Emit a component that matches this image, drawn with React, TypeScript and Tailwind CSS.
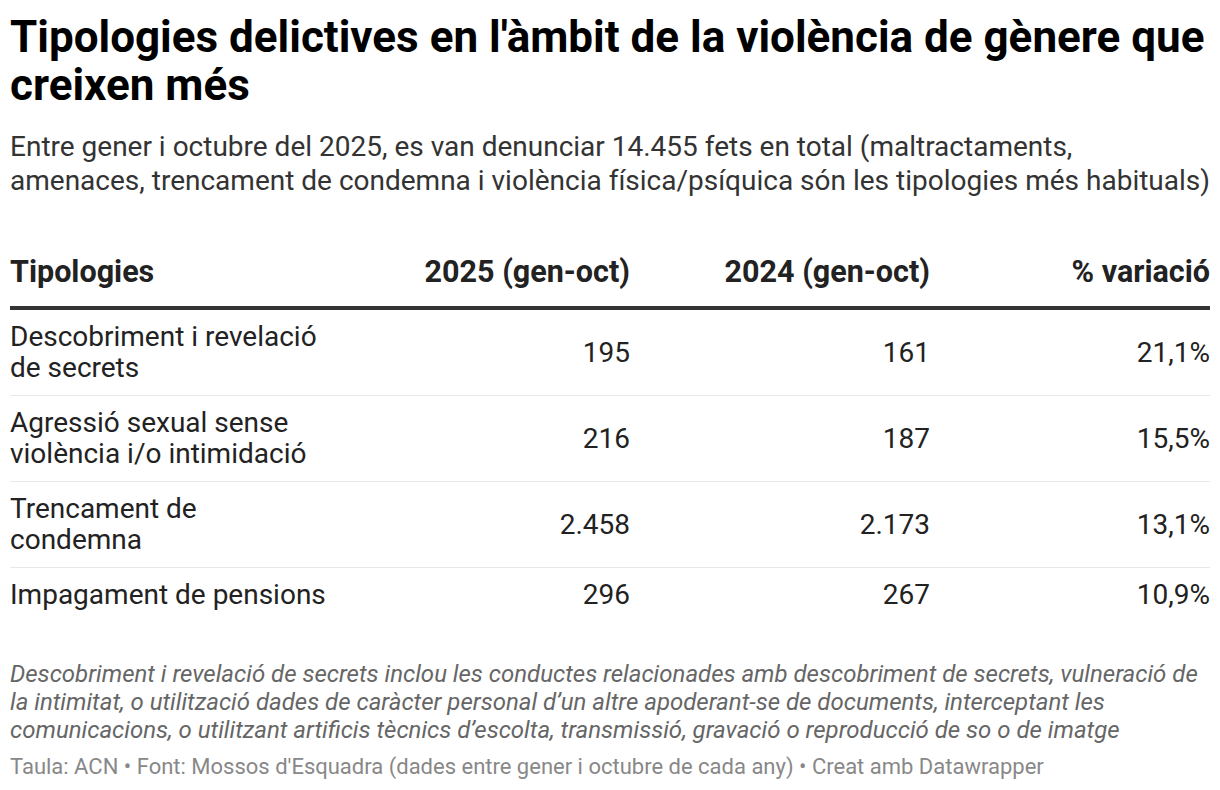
// Taula: tipologies delictives en l'àmbit de la violència de gènere

type Row = {
  name: string;
  y2025: string;
  y2024: string;
  variation: string;
};

const rows: Row[] = [
  { name: "Descobriment i revelació de secrets", y2025: "195", y2024: "161", variation: "21,1%" },
  { name: "Agressió sexual sense violència i/o intimidació", y2025: "216", y2024: "187", variation: "15,5%" },
  { name: "Trencament de condemna", y2025: "2.458", y2024: "2.173", variation: "13,1%" },
  { name: "Impagament de pensions", y2025: "296", y2024: "267", variation: "10,9%" },
];

const cols = "grid grid-cols-[320px_300px_300px_280px]";

export default function App() {
  return (
    <div
      className="w-[1220px] h-[790px] bg-white px-[10px] pt-[13px] overflow-hidden"
      style={{ fontFamily: "Roboto, 'Liberation Sans', sans-serif" }}
    >
      <h1 className="text-[44px] leading-[48px] font-bold text-black">
        Tipologies delictives en l'àmbit de la violència de gènere que creixen més
      </h1>
      <p className="mt-[21px] -mr-[8px] text-[28px] leading-[34px] text-[#333]">
        Entre gener i octubre del 2025, es van denunciar 14.455 fets en total (maltractaments,
        <br />
        amenaces, trencament de condemna i violència física/psíquica són les tipologies més habituals)
      </p>

      <div className="mt-[58px] text-[#222]">
        <div className={`${cols} text-[30.5px] leading-[32px] font-bold pb-[18px] border-b-4 border-[#333]`}>
          <div>Tipologies</div>
          <div className="text-right">2025 (gen-oct)</div>
          <div className="text-right">2024 (gen-oct)</div>
          <div className="text-right">% variació</div>
        </div>
        {rows.map((row, i) => (
          <div
            key={row.name}
            className={`${cols} items-center text-[28px] leading-[31px] pt-[11px] pb-[12px] ${
              i < rows.length - 1 ? "border-b border-[#e8e8e8]" : ""
            }`}
          >
            <div>{row.name}</div>
            <div className="text-right">{row.y2025}</div>
            <div className="text-right">{row.y2024}</div>
            <div className="text-right">{row.variation}</div>
          </div>
        ))}
      </div>

      <p className="mt-[38px] text-[24px] leading-[28px] italic text-[#666]">
        Descobriment i revelació de secrets inclou les conductes relacionades amb descobriment de secrets,
        vulneració de la intimitat, o utilització dades de caràcter personal d’un altre apoderant-se de
        documents, interceptant les comunicacions, o utilitzant artificis tècnics d’escolta, transmissió,
        gravació o reproducció de so o de imatge
      </p>
      <p className="mt-[10px] text-[22px] leading-[26px] text-[#888]">
        Taula: ACN • Font: Mossos d'Esquadra (dades entre gener i octubre de cada any) • Creat amb Datawrapper
      </p>
    </div>
  );
}
